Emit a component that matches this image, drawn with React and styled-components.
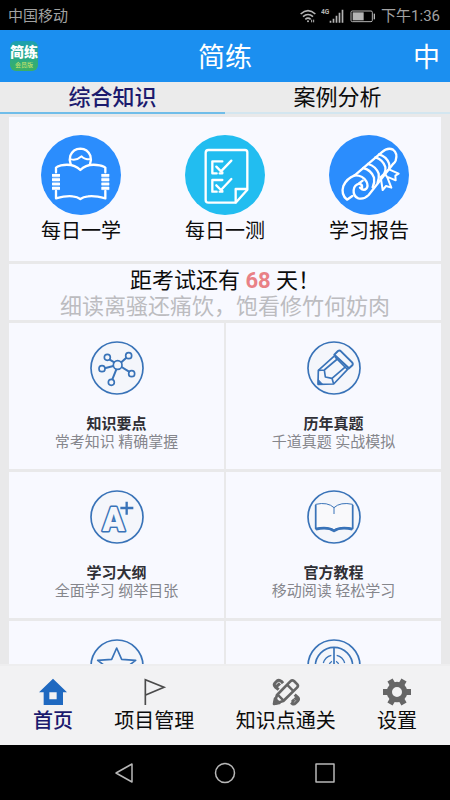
import React from "react";
import styled, { createGlobalStyle } from "styled-components";

const GlobalStyle = createGlobalStyle`
  *, *::before, *::after { box-sizing: border-box; }
  body {
    margin: 0;
    background: #000;
    font-family: Roboto, "Noto Sans CJK SC", sans-serif;
    color: #0c0c0c;
  }
  button { font: inherit; color: inherit; border: 0; padding: 0; background: none; cursor: pointer; }
  a { color: inherit; text-decoration: none; }
  svg { display: block; flex: none; }
`;

const Screen = styled.div`
  display: flex;
  flex-direction: column;
  height: 100vh;
`;

const StatusBar = styled.div`
  flex: none;
  display: flex;
  align-items: center;
  justify-content: space-between;
  height: 30px;
  padding: 2px 10px 0 8px;
  background: #000;
  color: #a2a2a2;
  font-size: 15px;
  line-height: 20px;
`;

const StatusIcons = styled.div`
  display: flex;
  align-items: center;
  gap: 5px;
`;

const Header = styled.header`
  flex: none;
  display: grid;
  grid-template-columns: 1fr auto 1fr;
  align-items: center;
  height: 52px;
  padding: 0 10px;
  background: #1b8ff0;
  color: #fff;
`;

const Logo = styled.div`
  display: flex;
  flex-direction: column;
  align-items: center;
  justify-content: center;
  width: 28px;
  height: 30px;
  border-radius: 6px;
  background: linear-gradient(#1e9fb0, #27a98c 50%, #3cb063);
  white-space: nowrap;
`;

const LogoName = styled.span`
  font-size: 14px;
  line-height: 18px;
  font-weight: 900;
`;

const LogoTag = styled.span`
  font-size: 6px;
  line-height: 8px;
  color: #d3e66a;
`;

const Title = styled.h1`
  margin: 0;
  padding-top: 4px;
  font-size: 27px;
  line-height: 40px;
  font-weight: 400;
`;

const LanguageButton = styled.button`
  justify-self: end;
  padding-top: 4px;
  font-size: 27px;
  line-height: 40px;
`;

const Tabs = styled.div`
  flex: none;
  display: grid;
  grid-template-columns: 1fr 1fr;
  background: #ebebeb;
`;

const Tab = styled.button`
  height: 32px;
  padding-top: 2px;
  font-size: 22px;
  line-height: 28px;
  font-weight: ${(p) => (p.$active ? 500 : 400)};
  color: ${(p) => (p.$active ? "#1b1a6e" : "#0c0c0c")};
  border-bottom: 2px solid ${(p) => (p.$active ? "#70bde9" : "#d3e6f0")};
`;

const Content = styled.main`
  flex: 1;
  min-height: 0;
  overflow-y: auto;
  scrollbar-width: none;
  display: flex;
  flex-direction: column;
  gap: 3px;
  padding: 3px 9px;
  background: #e9e9ea;
`;

const DailyCard = styled.nav`
  flex: none;
  display: grid;
  grid-template-columns: repeat(3, 1fr);
  padding: 18px 0 14px;
  background: #f8f9ff;
`;

const DailyLink = styled.a`
  display: flex;
  flex-direction: column;
  align-items: center;
  font-size: 20px;
  line-height: 32px;
`;

const Countdown = styled.section`
  flex: none;
  padding: 4px 0 0;
  background: #f8f9ff;
  text-align: center;
  font-size: 22px;
  line-height: 26px;
  white-space: nowrap;
`;

const Line = styled.p`
  margin: 0;
  color: ${(p) => (p.$muted ? "#bcbcc0" : "#0c0c0c")};
`;

const Days = styled.strong`
  font-weight: 700;
  color: #e98186;
`;

const Grid = styled.div`
  flex: none;
  display: grid;
  grid-template-columns: 1fr 1fr;
  gap: 3px 2px;
`;

const Cell = styled.a`
  display: flex;
  flex-direction: column;
  align-items: center;
  padding: 18px 0;
  background: #f8f9ff;
  font-size: 15px;
  line-height: 18px;
  color: #85868c;
`;

const CellTitle = styled.strong`
  margin-top: 20px;
  font-weight: 700;
  color: #303036;
`;

const BottomNav = styled.nav`
  flex: none;
  display: flex;
  justify-content: space-between;
  padding: 12px 33px 9px;
  border-top: 2px solid #eeeeef;
  background: #f2f2f3;
`;

const NavLink = styled.a`
  display: flex;
  flex-direction: column;
  align-items: center;
  font-size: 20px;
  line-height: 30px;
  font-weight: ${(p) => (p.$active ? 500 : 400)};
  color: ${(p) => (p.$active ? "#1b1a6e" : "#0c0c0c")};
`;

const SystemBar = styled.div`
  flex: none;
  display: flex;
  justify-content: center;
  align-items: center;
  gap: 76px;
  height: 55px;
  background: #000;
`;

/* ---------- status icons ---------- */

const WifiIcon = () => (
  <svg width="16" height="14" viewBox="0 0 48 42" fill="none" stroke="#b4b4b4" strokeWidth="5" aria-hidden="true">
    <path d="M2 15Q24-5 46 15M9 23Q24 10 39 23M16 31Q24 24 32 31" />
    <circle cx="24" cy="37" r="3" fill="#b4b4b4" stroke="none" />
    <path d="M35 32v8M41 32v8" strokeWidth="3" />
  </svg>
);

const SignalIcon = () => (
  <svg width="24" height="14" viewBox="0 0 72 42" fill="#b4b4b4" aria-hidden="true">
    <text x="0" y="16" fontSize="20" fontWeight="700" fontFamily="Roboto, sans-serif">4G</text>
    <path d="M26 35h5v6h-5zM35 29h5v12h-5zM44 20h5v21h-5zM53 11h5v30h-5zM62 2h5v39h-5z" />
  </svg>
);

const BatteryIcon = () => (
  <svg width="26" height="13" viewBox="0 0 78 39" fill="#b4b4b4" aria-hidden="true">
    <rect x="3" y="3" width="64" height="32" rx="4" fill="none" stroke="#b4b4b4" strokeWidth="3" />
    <rect x="8" y="7" width="33" height="24" />
    <rect x="71" y="11" width="4" height="17" />
  </svg>
);

/* ---------- daily icons ---------- */

const Disc = ({ color, children }) => (
  <svg width="80" height="80" viewBox="0 0 240 240" fill="none" stroke="#fff" strokeWidth="7" strokeLinejoin="round" strokeLinecap="round" aria-hidden="true">
    <circle cx="120" cy="120" r="120" fill={color} stroke="none" />
    {children}
  </svg>
);

const ReaderIcon = () => (
  <Disc color="#2b8dfd">
    <path d="M89 87Q84 74 88 62Q96 42 118 41Q140 42 148 62Q152 74 147 87" />
    <path d="M90 73Q106 78 122 64Q130 73 146 73" strokeWidth="6" />
    <path d="M45 112V98Q48 94 60 91Q98 84 118 105Q138 84 176 91Q190 94 193 98V112" />
    <path d="M45 168V190Q78 181 95 184Q109 185 118 192Q127 185 141 184Q160 181 193 190V168" />
    <path d="M33 121H57M33 134H57M33 147H57M33 160H57M181 121H205M181 134H205M181 147H205M181 160H205" strokeWidth="8" strokeLinecap="butt" />
    <path d="M45 116V166M193 116V166" strokeWidth="22" strokeOpacity="0.3" strokeLinecap="butt" />
  </Disc>
);

const TestIcon = () => (
  <Disc color="#22bdf0">
    <path d="M70 45H180Q187 45 187 52V164L152 203H70Q62 203 62 195V53Q62 45 70 45Z" />
    <path d="M152 202V162H186" />
    <path d="M112 79H82V115H95M112 135H82V170H95" />
    <path d="M94 95L108 109L139 77M94 151L108 165L139 132" />
    <path d="M112 112V115H104M112 168V170H104" />
  </Disc>
);

const ReportIcon = () => (
  <Disc color="#2b8dfd">
    <path d="M77 121L158 52Q176 36 192 44Q207 55 200 77Q198 82 192 87L119 180Q105 194 88 190Q72 184 74 165Q76 149 91 146Q101 148 99 158" />
    <path d="M77 121Q53 130 43 153Q35 178 54 194L70 183" />
    <path d="M77 121Q101 120 112 139Q119 153 112 161Q104 169 93 158" />
    <path d="M90 145L101 137M103 99Q127 105 135 128Q138 142 131 157M117 87Q141 94 149 116Q151 128 146 142" />
    <path d="M139 67Q162 74 169 96Q171 108 166 115M150 58Q172 64 180 85Q183 94 180 101" />
    <path d="M155 126L167 115L180 103L209 116L199 122L200 136L179 127M155 126L161 165L171 153L187 158L175 127L167 115" strokeWidth="6" />
  </Disc>
);

/* ---------- outlined icons ---------- */

const Ring = ({ children }) => (
  <svg width="54" height="54" viewBox="0 0 162 162" fill="none" stroke="#3973b8" strokeWidth="6" strokeLinejoin="round" aria-hidden="true">
    <circle cx="81" cy="81" r="78" fill="#f4f6fb" strokeWidth="5" />
    {children}
  </svg>
);

const MoleculeIcon = () => (
  <Ring>
    <path d="M58 55L74 65M109 50L94 64M44 82L70 75M95 78L117 92M79 85L67 115" />
    <circle cx="83" cy="72" r="13" strokeWidth="5" />
    <circle cx="52" cy="49" r="9" strokeWidth="5" />
    <circle cx="116" cy="44" r="9" strokeWidth="5" />
    <circle cx="36" cy="83" r="9" strokeWidth="5" />
    <circle cx="125" cy="98" r="9" strokeWidth="5" />
    <circle cx="64" cy="124" r="9" strokeWidth="5" />
  </Ring>
);

const PencilIcon = () => (
  <Ring>
    <path d="M82 41L93 30Q98 27 102 31L136 65Q139 69 136 73L126 82Z" />
    <path d="M84 43L34 88L33 130L80 129L124 83M84 48L120 84" strokeWidth="5" />
    <path d="M34 88L52 87L55 108L75 112L80 129M52 87L91 54M75 112L116 77" strokeWidth="5" />
    <path d="M34 116L47 130H34Z" fill="#3973b8" strokeWidth="3" />
  </Ring>
);

const GradeIcon = () => (
  <Ring>
    <text x="71" y="124" textAnchor="middle" fontSize="98" fontWeight="900" fontFamily="Roboto, sans-serif" fill="#f4f6fb" strokeWidth="9" paintOrder="stroke">A</text>
    <path d="M110 35V74M91 54H130" strokeWidth="7" />
  </Ring>
);

const BookIcon = () => (
  <Ring>
    <path d="M26 43Q62 35 81 53Q100 35 137 43V116Q100 108 81 122Q62 108 26 116Z" fill="#f9f9fb" strokeWidth="3" />
    <path d="M26 45V116Q62 108 81 121Q100 108 137 116V45" strokeWidth="5" />
    <path d="M27 118Q62 110 81 123Q100 110 136 118" strokeWidth="7" />
    <path d="M81 53V72" strokeWidth="3" />
  </Ring>
);

const StarIcon = () => (
  <Ring>
    <path d="M80 27L95 61L137 64L105 88L116 128L80 105L44 128L55 88L23 64L65 61Z" strokeWidth="5" />
  </Ring>
);

const TargetIcon = () => (
  <Ring>
    <circle cx="81" cy="81" r="56" strokeWidth="5" />
    <path d="M49 72A33 33 0 0 1 73 49M89 49A33 33 0 0 1 113 72M113 90A33 33 0 0 1 49 90" strokeWidth="4" />
    <path d="M81 26V76" strokeWidth="5" />
    <path d="M66 78Q69 69 75 67M87 67Q93 69 96 78" strokeWidth="4" />
  </Ring>
);

/* ---------- bottom navigation icons ---------- */

const HomeIcon = () => (
  <svg width="28" height="28" viewBox="0 0 84 84" fill="#1f69c0" fillRule="evenodd" aria-hidden="true">
    <path d="M42 2L84 43H72V81H14V43H0ZM31 43V64H53V43Z" />
  </svg>
);

const FlagIcon = () => (
  <svg width="28" height="28" viewBox="0 0 84 84" fill="none" stroke="#4b4b4b" strokeWidth="5" aria-hidden="true">
    <path d="M16 81V5L72 28L17 51" />
  </svg>
);

const QuizIcon = () => (
  <svg width="28" height="28" viewBox="0 0 84 84" fill="none" stroke="#666" strokeWidth="8" strokeLinejoin="round" aria-hidden="true">
    <path d="M7 77L15 51L55 10Q60 4 66 9L76 19Q80 24 75 29L34 69Z" />
    <path d="M45 20L65 40M17 50L35 68" strokeWidth="7" />
    <path d="M6 78L9 62L22 75Z" fill="#666" />
    <path d="M20 35L10 27Q4 21 9 15L15 9Q21 4 28 10L33 16M13 26L24 16" strokeWidth="9" />
    <path d="M57 74L61 77Q66 80 71 75L77 69Q82 63 77 58L68 50M60 72L67 65M68 65L75 58" strokeWidth="9" />
  </svg>
);

const GearIcon = () => (
  <svg width="28" height="28" viewBox="0 0 84 84" fill="none" stroke="#666" aria-hidden="true">
    <circle cx="42" cy="42" r="23" strokeWidth="16" />
    <path d="M64 42H84M0 42H20M53 23L63 6M31 23L21 6M53 61L63 78M31 61L21 78" strokeWidth="18" />
  </svg>
);

const daily = [
  { label: "每日一学", Icon: ReaderIcon },
  { label: "每日一测", Icon: TestIcon },
  { label: "学习报告", Icon: ReportIcon },
];

const sections = [
  { title: "知识要点", text: "常考知识 精确掌握", Icon: MoleculeIcon },
  { title: "历年真题", text: "千道真题 实战模拟", Icon: PencilIcon },
  { title: "学习大纲", text: "全面学习 纲举目张", Icon: GradeIcon },
  { title: "官方教程", text: "移动阅读 轻松学习", Icon: BookIcon },
];

const moreSections = [
  { id: "star", Icon: StarIcon },
  { id: "target", Icon: TargetIcon },
];

const navItems = [
  { label: "首页", Icon: HomeIcon, active: true },
  { label: "项目管理", Icon: FlagIcon },
  { label: "知识点通关", Icon: QuizIcon },
  { label: "设置", Icon: GearIcon },
];

export default function App() {
  return (
    <>
      <GlobalStyle />
      <Screen>
        <StatusBar>
          <span>中国移动</span>
          <StatusIcons>
            <WifiIcon />
            <SignalIcon />
            <BatteryIcon />
            <span>下午1:36</span>
          </StatusIcons>
        </StatusBar>

        <Header>
          <Logo>
            <LogoName>简练</LogoName>
            <LogoTag>会员版</LogoTag>
          </Logo>
          <Title>简练</Title>
          <LanguageButton type="button">中</LanguageButton>
        </Header>

        <Tabs role="tablist">
          <Tab type="button" role="tab" aria-selected="true" $active>综合知识</Tab>
          <Tab type="button" role="tab" aria-selected="false">案例分析</Tab>
        </Tabs>

        <Content>
          <DailyCard>
            {daily.map(({ label, Icon }) => (
              <DailyLink key={label} href="#">
                <Icon />
                {label}
              </DailyLink>
            ))}
          </DailyCard>

          <Countdown>
            <Line>距考试还有 <Days>68</Days> 天！</Line>
            <Line $muted>细读离骚还痛饮，饱看修竹何妨肉</Line>
          </Countdown>

          <Grid>
            {sections.map(({ title, text, Icon }) => (
              <Cell key={title} href="#">
                <Icon />
                <CellTitle>{title}</CellTitle>
                <span>{text}</span>
              </Cell>
            ))}
            {moreSections.map(({ id, Icon }) => (
              <Cell key={id} href="#">
                <Icon />
              </Cell>
            ))}
          </Grid>
        </Content>

        <BottomNav>
          {navItems.map(({ label, Icon, active }) => (
            <NavLink key={label} href="#" $active={active}>
              <Icon />
              {label}
            </NavLink>
          ))}
        </BottomNav>

        <SystemBar>
          <svg width="24" height="24" viewBox="0 0 24 24" fill="none" stroke="#b8b8b8" strokeWidth="1.5" strokeLinejoin="round" aria-hidden="true">
            <path d="M19 3V21L3 12Z" />
          </svg>
          <svg width="24" height="24" viewBox="0 0 24 24" fill="none" stroke="#b8b8b8" strokeWidth="1.5" aria-hidden="true">
            <circle cx="12" cy="12" r="9.5" />
          </svg>
          <svg width="24" height="24" viewBox="0 0 24 24" fill="none" stroke="#b8b8b8" strokeWidth="1.5" strokeLinejoin="round" aria-hidden="true">
            <rect x="3" y="3" width="18" height="18" />
          </svg>
        </SystemBar>
      </Screen>
    </>
  );
}
